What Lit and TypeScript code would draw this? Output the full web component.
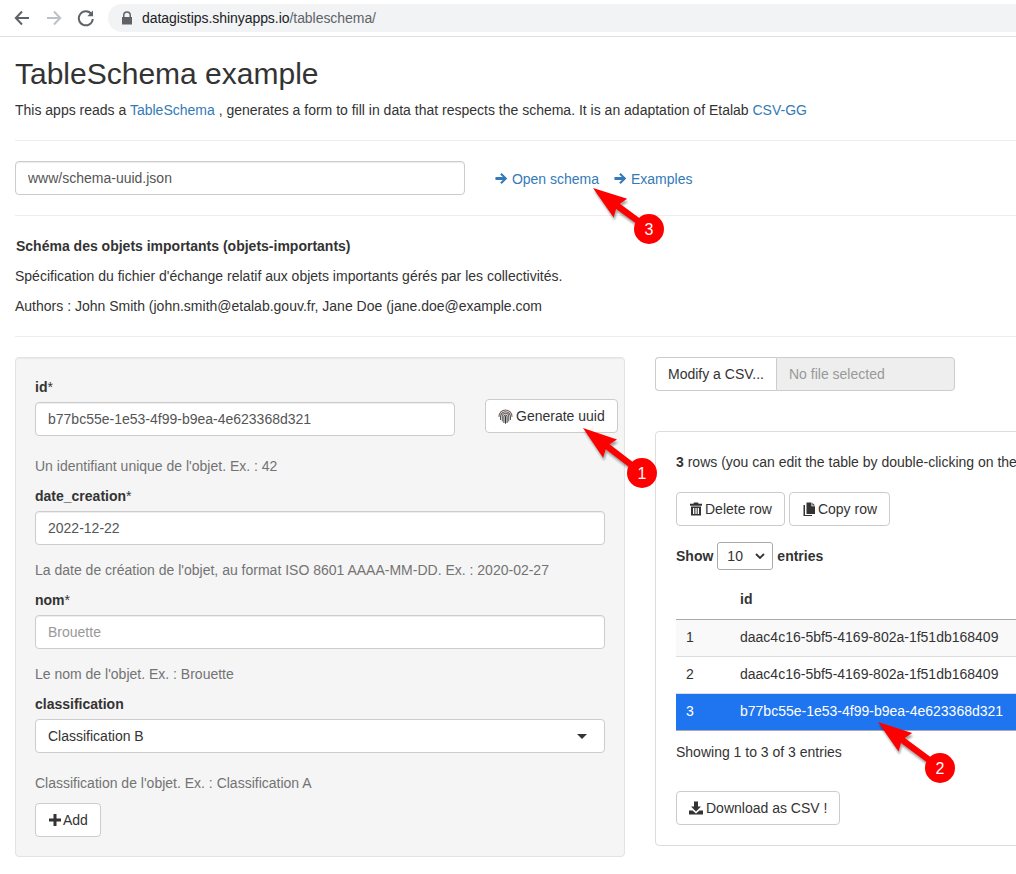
import { LitElement, html, css, svg } from "lit";
import { customElement } from "lit/decorators.js";

const arrowRight = html`<svg class="gi" viewBox="0 0 14 14"><path d="M.5 5.500h8L5.600 2.600 7.200 1l6 6-6 6-1.600-1.600 2.900-2.900h-8z" fill="currentColor"/></svg>`;
const trash = html`<svg class="gi big" viewBox="0 0 14 14"><path fill="#333" fill-rule="evenodd" d="M5 .5h4l.6 1.300H13v1.900H1V1.800h3.400zM2 4.500h10V13.500H2zM4 6v6h1.300V6zm2.400 0v6h1.300V6zm2.300 0v6H10V6z"/></svg>`;
const copy = html`<svg class="gi big" viewBox="0 0 14 14"><path fill="#333" d="M4.500.5h5v3.800H13V12H4.500zM10.400.7 12.900 3.400h-2.500zM3 3v10h7v1H1.500V3z"/></svg>`;
const download = html`<svg class="gi big" viewBox="0 0 14 14"><path fill="#333" d="M5 .5h4v5h3L7 10.500 2 5.500h3zM0 9.500h3.500L7 12.500l3.500-3h3.500v4H0z"/></svg>`;
const plus = html`<svg class="gi big" viewBox="0 0 14 14"><path fill="#333" d="M5.500 1h3v4.500H13v3H8.500V13h-3V8.500H1v-3h4.500z"/></svg>`;
const fingerprint = html`<svg class="fp" viewBox="0 0 15 15" fill="none" stroke-width="1.050" stroke-linecap="round">
  <path stroke="#7d5a48" d="M1 7.500C1 3.800 3.900 1 7.500 1S14 3.800 14 7.500"/>
  <path stroke="#3a4a5c" d="M2.600 10.500V7.500C2.600 4.800 4.800 2.700 7.500 2.700s4.900 2.100 4.900 4.800v3"/>
  <path stroke="#7d5a48" d="M4.300 12V7.500c0-1.800 1.400-3.200 3.200-3.200s3.200 1.400 3.200 3.200V12"/>
  <path stroke="#3a4a5c" d="M5.900 13.500V7.500c0-.9.700-1.600 1.600-1.600s1.600.7 1.600 1.600v6"/>
  <path stroke="#333" d="M7.500 7.600v6.600"/>
</svg>`;

function callout(tip: [number, number], c: [number, number], n: string) {
  const [x1, y1] = tip;
  const [x2, y2] = c;
  const a = Math.atan2(y2 - y1, x2 - x1);
  const ux = Math.cos(a), uy = Math.sin(a);
  const nx = -uy, ny = ux;
  const len = Math.hypot(x2 - x1, y2 - y1);
  const hb = 34, hw = 11.5, sw = 3.2;
  const p = (along: number, side: number) => `${(x1 + ux * along + nx * side).toFixed(1)},${(y1 + uy * along + ny * side).toFixed(1)}`;
  const poly = [p(0, 0), p(hb, hw), p(hb - 3, sw), p(len, sw), p(len, -sw), p(hb - 3, -sw), p(hb, -hw)].join(" ");
  return svg`
    <polygon points=${poly} fill="#000" opacity=".35" transform="translate(1 3)" filter="url(#sh)"/>
    <polygon points=${poly} fill="#f00"/>
    <circle cx=${x2} cy=${y2} r="15" fill="#f00"/>
    <text x=${x2} y=${y2 + 6} text-anchor="middle" fill="#fff" font-family="Liberation Sans, sans-serif" font-size="16">${n}</text>`;
}

@customElement("app-root")
export class AppRoot extends LitElement {
  static styles = css`
    :host { display: block; position: relative; width: 1016px; height: 874px; overflow: hidden; background: #fff;
      font-family: "Liberation Sans", Arial, sans-serif; font-size: 14px; line-height: 20px; color: #333; }
    * { box-sizing: border-box; }
    .gi { width: 13px; height: 13px; display: inline-block; vertical-align: -1px; flex: none; }
    .gi.big { width: 14px; height: 14px; }
    .fp { width: 15px; height: 15px; display: inline-block; flex: none; margin-right: 3px; }
    a { color: #337ab7; text-decoration: none; }

    .chrome { height: 37px; border-bottom: 1px solid #dedfe1; display: flex; align-items: center; padding-left: 13px; background: #fff; margin-bottom: -1px; }
    .nav { width: 18px; height: 18px; flex: none; }
    .nav.b { margin-right: 14px; }
    .omni { margin-left: 13px; width: 920px; height: 28px; border-radius: 14px; background: #f1f3f4; display: flex; align-items: center; padding-left: 13px; font-size: 14px; letter-spacing: -.05px; color: #5f6368; flex: none; }
    .omni svg { width: 12px; height: 14px; margin-right: 9px; }
    .omni b { font-weight: 400; color: #202124; }

    .page { padding: 0 15px; width: 1100px; }
    h1 { font-size: 30px; font-weight: 400; line-height: 34px; margin: 21px 0 0; color: #333; }
    .intro { margin: 9px 0 0; height: 20px; }
    hr { border: 0; border-top: 1px solid #eee; margin: 0; }
    .hr1 { margin-top: 20px; }
    .open { display: flex; align-items: center; margin-top: 20px; height: 34px; }
    .open input { width: 450px; flex: none; }
    .links { margin-left: 30px; margin-top: 2px; display: flex; gap: 15px; }
    .hr2 { margin-top: 20px; }
    .meta { padding-left: 1px; margin-top: 20px; font-weight: 700; }
    .desc { margin-top: 10px; }
    .hr3 { margin-top: 20px; }

    input, .select { height: 34px; border: 1px solid #ccc; border-radius: 4px; background: #fff; font: inherit; color: #555; padding: 6px 12px; display: block; box-shadow: inset 0 1px 1px rgba(0,0,0,.075); outline: none; }
    input::placeholder { color: #999; opacity: 1; }
    .full { width: 570px; }

    .cols { display: flex; gap: 30px; margin-top: 20px; align-items: flex-start; }
    .well { width: 610px; height: 500px; flex: none; background: #f5f5f5; border: 1px solid #e3e3e3; border-radius: 4px; padding: 19px; box-shadow: inset 0 1px 1px rgba(0,0,0,.05); }
    label { display: block; font-weight: 700; height: 20px; margin-bottom: 5px; }
    label span { font-weight: 400; }
    .idrow { display: flex; align-items: flex-start; }
    .idrow input { width: 420px; flex: none; }
    .idrow .btn { margin-left: 30px; margin-top: -3px; gap: 0; }
    .help { color: #737373; margin-top: 15px; height: 20px; }
    .help.wide { margin-top: 20px; }
    .field { margin-top: 10px; }
    .select { display: flex; align-items: center; justify-content: space-between; color: #333; box-shadow: none; }
    .caret { width: 0; height: 0; border-left: 5px solid transparent; border-right: 5px solid transparent; border-top: 5px solid #333; margin-right: 5px; }
    .btn { display: inline-flex; align-items: center; gap: 2px; height: 34px; padding: 0 12px; border: 1px solid #ccc; border-radius: 4px; background: #fff; color: #333; font: inherit; white-space: nowrap; flex: none; }
    .add { margin-top: 10px; gap: 1px; }

    .right { width: 430px; flex: none; }
    .file { display: flex; width: 300px; height: 34px; }
    .file .pick { width: 121px; padding: 0 12px; border: 1px solid #ccc; border-right: 0; border-radius: 4px 0 0 4px; background: #fff; display: flex; align-items: center; white-space: nowrap; }
    .file .name { flex: 1; border: 1px solid #ccc; border-radius: 0 4px 4px 0; background: #eee; color: #999; padding: 0 12px; display: flex; align-items: center; }
    .panel { margin-top: 40px; height: 415px; width: 500px; border: 1px solid #ddd; border-radius: 4px; padding: 20px; }
    .count { height: 20px; white-space: nowrap; }
    .tools { display: flex; gap: 4px; margin-top: 20px; }
    .len { display: flex; align-items: center; font-weight: 700; margin-top: 16px; height: 28px; gap: 4px; }
    .len .sel { width: 56px; height: 28px; border: 1px solid #aaa; border-radius: 3px; background: #fff; display: flex; align-items: center; justify-content: space-between; padding: 0 7px 0 9px; font-weight: 400; }
    .len svg { width: 10px; height: 6px; }
    .tbl { margin-top: 15px; width: 100%; border-collapse: collapse; }
    .tbl th { text-align: left; font-weight: 700; height: 34px; padding: 0 10px 5px; border-bottom: 1px solid #aaa; }
    .tbl td { height: 37px; padding: 0 10px 1px; border-bottom: 1px solid #ddd; }
    .tbl tr.odd td { background: #f9f9f9; }
    .tbl tr.sel td { background: #1f75f0; color: #fff; border-top: 1px solid #aaa; border-bottom: 1px solid #aaa; }
    .c1 { width: 54px; }
    .info { margin-top: 11px; height: 20px; }
    .dl { margin-top: 29px; gap: 3px; }

    .over { position: absolute; left: 0; top: 0; width: 1016px; height: 874px; pointer-events: none; }
  `;

  render() {
    return html`
      <div class="chrome">
        <svg class="nav b" viewBox="0 0 18 18"><path d="M16 9H3M9 2.500 2.800 9 9 15.500" fill="none" stroke="#5f6368" stroke-width="2"/></svg>
        <svg class="nav b" viewBox="0 0 18 18"><path d="M2 9h13M9 2.500 15.200 9 9 15.500" fill="none" stroke="#bdc1c6" stroke-width="2"/></svg>
        <svg class="nav" viewBox="0 0 18 18"><path d="M14.500 5.200A7 7 0 1 0 15.800 10" fill="none" stroke="#5f6368" stroke-width="2"/><path d="M16 1.500V7.200h-5.700z" fill="#5f6368"/></svg>
        <div class="omni">
          <svg viewBox="0 0 12 14"><path fill="#5f6368" d="M2 6V4.200a4 4 0 0 1 8 0V6h1v7.500H1V6zm1.500 0h5V4.200a2.500 2.500 0 0 0-5 0z"/></svg>
          <span><b>datagistips.shinyapps.io</b>/tableschema/</span>
        </div>
      </div>
      <div class="page">
        <h1>TableSchema example</h1>
        <p class="intro">This apps reads a <a href="#">TableSchema</a> , generates a form to fill in data that respects the schema. It is an adaptation of Etalab <a href="#">CSV-GG</a></p>
        <hr class="hr1" />
        <div class="open">
          <input value="www/schema-uuid.json" />
          <div class="links"><a href="#">${arrowRight} Open schema</a><a href="#">${arrowRight} Examples</a></div>
        </div>
        <hr class="hr2" />
        <div class="meta">Schéma des objets importants (objets-importants)</div>
        <div class="desc">Spécification du fichier d'échange relatif aux objets importants gérés par les collectivités.</div>
        <div class="desc">Authors : John Smith (john.smith@etalab.gouv.fr, Jane Doe (jane.doe@example.com</div>
        <hr class="hr3" />
        <div class="cols">
          <div class="well">
            <label>id<span>*</span></label>
            <div class="idrow">
              <input value="b77bc55e-1e53-4f99-b9ea-4e623368d321" />
              <button class="btn">${fingerprint}Generate uuid</button>
            </div>
            <div class="help wide">Un identifiant unique de l'objet. Ex. : 42</div>
            <label class="field">date_creation<span>*</span></label>
            <input class="full" value="2022-12-22" />
            <div class="help">La date de création de l'objet, au format ISO 8601 AAAA-MM-DD. Ex. : 2020-02-27</div>
            <label class="field">nom<span>*</span></label>
            <input class="full" placeholder="Brouette" />
            <div class="help">Le nom de l'objet. Ex. : Brouette</div>
            <label class="field">classification</label>
            <div class="select full">Classification B<span class="caret"></span></div>
            <div class="help wide">Classification de l'objet. Ex. : Classification A</div>
            <button class="btn add">${plus}Add</button>
          </div>
          <div class="right">
            <div class="file"><div class="pick">Modify a CSV...</div><div class="name">No file selected</div></div>
            <div class="panel">
              <div class="count"><b>3</b> rows (you can edit the table by double-clicking on the</div>
              <div class="tools"><button class="btn">${trash}Delete row</button><button class="btn">${copy}Copy row</button></div>
              <div class="len">Show <div class="sel">10 <svg viewBox="0 0 10 6"><path d="M1 1l4 4 4-4" fill="none" stroke="#333" stroke-width="1.800"/></svg></div> entries</div>
              <table class="tbl">
                <thead><tr><th class="c1"></th><th>id</th></tr></thead>
                <tbody>
                  <tr class="odd"><td>1</td><td>daac4c16-5bf5-4169-802a-1f51db168409</td></tr>
                  <tr><td>2</td><td>daac4c16-5bf5-4169-802a-1f51db168409</td></tr>
                  <tr class="sel"><td>3</td><td>b77bc55e-1e53-4f99-b9ea-4e623368d321</td></tr>
                </tbody>
              </table>
              <div class="info">Showing 1 to 3 of 3 entries</div>
              <button class="btn dl">${download}Download as CSV !</button>
            </div>
          </div>
        </div>
      </div>
      <svg class="over" viewBox="0 0 1016 874">
        <defs><filter id="sh" x="-20%" y="-20%" width="140%" height="140%"><feGaussianBlur stdDeviation="1.200"/></filter></defs>
        ${callout([593, 188], [649, 229], "3")}
        ${callout([583, 428], [642, 473], "1")}
        ${callout([878, 722], [940, 768], "2")}
      </svg>
    `;
  }
}
